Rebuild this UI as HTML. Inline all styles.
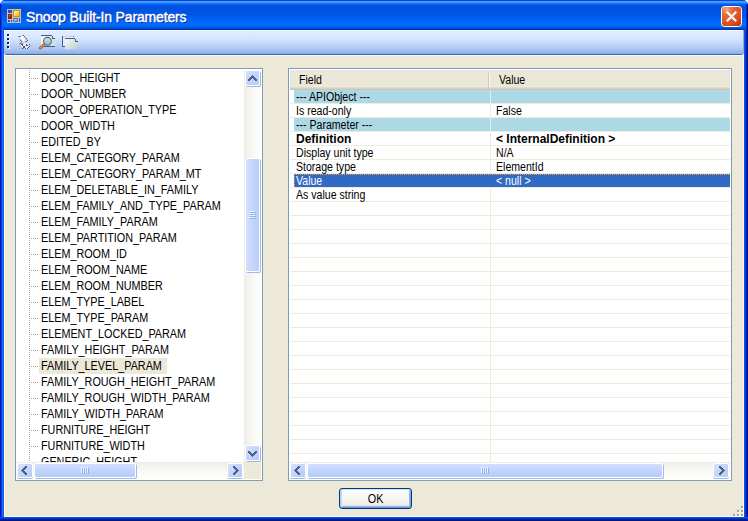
<!DOCTYPE html>
<html><head><meta charset="utf-8">
<style>
*{box-sizing:border-box;margin:0;padding:0}
html,body{width:748px;height:521px;overflow:hidden;background:#fff;font-family:"Liberation Sans",sans-serif}
.a{position:absolute}
#win{left:0;top:0;width:748px;height:521px;background:#0848DC;border-radius:5px 5px 0 0;overflow:hidden}
#lb{left:0;top:29px;width:4px;height:492px;background:linear-gradient(90deg,#0012C8 0,#0012C8 1px,#0840E0 1px,#0840E0 2px,#1A6EF0 2px,#1A6EF0 3px,#0C5CE8 3px)}
#lt{left:0;top:4px;width:2px;height:26px;background:linear-gradient(90deg,#0018C0 0,#0018C0 1px,#0840E0 1px)}
#rb{left:744px;top:29px;width:4px;height:492px;background:linear-gradient(90deg,#0A50E4 0,#0A50E4 1px,#0640DC 1px,#0640DC 2px,#0028B8 2px,#0028B8 3px,#000E88 3px)}
#rt{left:746px;top:4px;width:2px;height:26px;background:linear-gradient(90deg,#0030C8 0,#0030C8 1px,#00108E 1px)}
#bb{left:0;top:517px;width:748px;height:4px;background:linear-gradient(180deg,#0A4EE4 0,#0A4EE4 1px,#0636D4 1px,#0636D4 2px,#0020A8 2px,#0020A8 3px,#00128A 3px)}
#title{left:0;top:0;width:748px;height:30px;border-radius:5px 5px 0 0;background:linear-gradient(180deg,#0A44D8 0px,#0A44D8 1px,#4A9EFF 1px,#4A9EFF 2px,#3C94FF 2px,#3C94FF 3px,#1A76F8 3px,#1A76F8 4px,#0660EE 4px,#0660EE 5px,#0058E6 5px,#0058E6 6px,#0054E2 6px,#0054E2 7px,#0052E0 7px,#0052E0 8px,#0052DF 8px,#0052DF 9px,#0052DF 9px,#0052DF 10px,#0052DF 10px,#0052DF 11px,#0053E0 11px,#0053E0 12px,#0054E2 12px,#0054E2 13px,#0055E4 13px,#0055E4 14px,#0057E7 14px,#0057E7 15px,#0059EA 15px,#0059EA 16px,#005BED 16px,#005BED 17px,#005EF0 17px,#005EF0 18px,#0060F3 18px,#0060F3 19px,#0063F6 19px,#0063F6 20px,#0066F9 20px,#0066F9 21px,#0068FB 21px,#0068FB 22px,#006AFD 22px,#006AFD 23px,#006BFE 23px,#006BFE 24px,#006BFF 24px,#006BFF 25px,#0069FC 25px,#0069FC 26px,#0064F5 26px,#0064F5 27px,#005AE6 27px,#005AE6 28px,#0046CC 28px,#0046CC 29px,#0034B4 29px,#0034B4 30px)}
#ttext{left:26px;top:9px;color:#fff;font:14px "Liberation Sans",sans-serif;-webkit-text-stroke:0.45px #fff;letter-spacing:-0.15px;text-shadow:1px 1px 0 #0A1883;white-space:pre}
#close{left:721px;top:6px;width:21px;height:21px;border:1px solid #fff;border-radius:3px;background:radial-gradient(circle at 30% 25%,#F3A58A 0,#E5603A 35%,#D44414 80%,#C03A10 100%)}
#toolbar{left:4px;top:30px;width:740px;height:25px;border-radius:0 0 3px 3px;box-shadow:inset -1px 0 0 #8AAAE4;z-index:1;background:linear-gradient(180deg,#F4F8FF 0,#F4F8FF 1px,#E2EDFF 1px,#D8E6FD 8px,#C2D7F9 14px,#A8C4F2 20px,#90B2EB 23px,#88ACE8 24px,#3A64B8 24px,#3A64B8 25px)}
#content{left:4px;top:48px;width:740px;height:469px;background:#ECE9D8;box-shadow:inset 1px 1px 0 #FFFAE6,inset -1px -1px 0 #FFFAE6}
#cline{left:4px;top:55px;width:740px;height:1px;background:#FFFAE6}
.box{border:1px solid #7F9DB9;background:#fff}
#tree{left:15px;top:68px;width:248px;height:413px}
#grid{left:288px;top:68px;width:444px;height:413px}
#tv{left:17px;top:70px;width:227px;height:392px;overflow:hidden}
#vl{left:12px;top:0;width:1px;height:392px;background:repeating-linear-gradient(180deg,#ACA899 0,#ACA899 1px,transparent 1px,transparent 2px)}
.hd{position:absolute;left:14px;width:7px;height:1px;background:repeating-linear-gradient(90deg,#ACA899 0,#ACA899 1px,transparent 1px,transparent 2px)}
.ti{position:absolute;left:22px;height:16px;font-size:12px;line-height:16px;color:#000;white-space:pre;padding:0 3px 0 2px}
.ti span{display:inline-block;transform:scaleX(0.9);transform-origin:0 0}
.ti.sel{background:#ECE9D8;width:128px}
/* scrollbars */
.vtrack{background:linear-gradient(90deg,#EEEDE5 0,#F3F1EC 3px,#FDFDFA 14px,#FEFEFB 100%)}
.htrack{background:linear-gradient(180deg,#EEEDE5 0,#F3F1EC 3px,#FDFDFA 14px,#FEFEFB 100%)}
.btn{border-radius:2px;border:1px solid #fff;box-shadow:1px 1px 0 #A2B8E8;background:linear-gradient(135deg,#D8E4FD 0,#C6D7FC 40%,#B4CBF8 100%)}
.corner{background:#ECE9D8}
/* grid */
#gh{left:290px;top:70px;width:440px;height:20px;background:linear-gradient(180deg,#EBE8DA 0,#EBE8DA 16px,#EEEBDE 16px,#EEEBDE 17px,#E0DCCB 17px,#E0DCCB 18px,#D6D0BF 18px,#D6D0BF 19px,#CCC6B4 19px);font-size:12px;line-height:20px;color:#000}
#gh span{transform:scaleX(0.88);transform-origin:0 0}
#gsep{left:488px;top:73px;width:1px;height:14px;background:#C7C5B2;box-shadow:1px 0 0 #fff}
.gr{position:absolute;left:290px;width:440px;height:14px;border-bottom:1px solid #EFEBDD;font-size:12px;line-height:14px;color:#000;background:#fff}
.gr .f{position:absolute;left:6px;top:0;white-space:pre;transform:scaleX(0.88);transform-origin:0 0}
.gr .v{position:absolute;left:206px;top:0;white-space:pre;transform:scaleX(0.88);transform-origin:0 0}
.gr.b .f,.gr.b .v{transform:none}
.gr:before{content:"";position:absolute;left:200px;top:0;width:1px;height:14px;background:#EFEBDD}
.gr.cat{background:linear-gradient(90deg,#fff 0,#fff 4px,#ADD8E6 4px)}
.gr.b{font-weight:bold}
.gr.sel{background:linear-gradient(90deg,#fff 0,#fff 4px,#316AC5 4px);color:#fff}
.gr.sel:before{display:none}
.gl{position:absolute;left:290px;width:440px;height:1px;background:#EFEBDD}
#ok{left:339px;top:488px;width:73px;height:21px;border:1px solid #003C74;border-radius:3px;background:linear-gradient(180deg,#fff 0,#F4F4F0 60%,#ECEBE6 85%,#D6D0C5 100%);box-shadow:inset 0 1px 0 #CEDFFB,inset 1px 0 0 #B8CFF6,inset -1px 0 0 #7EA2E6,inset 0 -1px 0 #6F93DC,inset 2px 0 0 #C2D6F8,inset -2px 0 0 #98B6EE,inset 0 -2px 0 #95B3EC;font-size:12px;text-align:center;line-height:20px;color:#000}
#ok span{display:inline-block;transform:scaleX(0.9)}
svg.a{z-index:5}

#focus{left:294px;top:174px;width:436px;height:13px;z-index:3;
 background:
  repeating-linear-gradient(90deg,#E4A038 0,#E4A038 1px,transparent 1px,transparent 2px) 0 0/100% 1px no-repeat,
  repeating-linear-gradient(180deg,#E4A038 0,#E4A038 1px,transparent 1px,transparent 2px) 0 0/1px 100% no-repeat}
.gd{position:absolute;width:2px;height:2px;background:#A8A596;box-shadow:1px 1px 0 #fff}

</style></head><body>
<div id="win" class="a">
 <div id="title" class="a"></div>
 <div id="ttext" class="a">Snoop Built-In Parameters</div>

 <svg class="a" style="left:7px;top:9px" width="14" height="14" viewBox="0 0 14 14">
  <defs>
   <linearGradient id="ig1" x1="0" y1="0" x2="1" y2="1"><stop offset="0" stop-color="#FFF4C0"/><stop offset="0.5" stop-color="#FCD868"/><stop offset="1" stop-color="#EBB418"/></linearGradient>
   <linearGradient id="ig2" x1="0" y1="0" x2="0.6" y2="1"><stop offset="0" stop-color="#F08070"/><stop offset="0.5" stop-color="#C82818"/><stop offset="1" stop-color="#981008"/></linearGradient>
   <linearGradient id="ig3" x1="0" y1="0" x2="1" y2="1"><stop offset="0" stop-color="#C8E0FF"/><stop offset="1" stop-color="#5C8CDC"/></linearGradient>
  </defs>
  <g shape-rendering="crispEdges">
  <rect x="0" y="0" width="14" height="14" fill="#CFC4A4"/>
  <rect x="1" y="1" width="4" height="3" fill="#0B5BEA"/>
  <rect x="1" y="5" width="4" height="5" fill="#A81810"/>
  <rect x="2" y="6" width="2" height="3" fill="url(#ig2)"/>
  <rect x="6" y="1" width="7" height="7" fill="#C0960C"/>
  <rect x="7" y="2" width="5" height="5" fill="url(#ig1)"/>
  <rect x="1" y="11" width="2" height="2" fill="#0B5BEA"/>
  <rect x="4" y="11" width="1" height="2" fill="#0B5BEA"/>
  <rect x="6" y="9" width="5" height="4" fill="#4A78C8"/>
  <rect x="7" y="10" width="3" height="2" fill="url(#ig3)"/>
  <rect x="12" y="9" width="1" height="4" fill="#0B5BEA"/>
  </g>
 </svg>
 <svg class="a" style="left:721px;top:6px" width="21" height="21" viewBox="0 0 21 21">
  <defs><radialGradient id="cg" cx="0.25" cy="0.15" r="1"><stop offset="0" stop-color="#F2A888"/><stop offset="0.3" stop-color="#E86838"/><stop offset="0.75" stop-color="#DC4E1C"/><stop offset="1" stop-color="#C43A0C"/></radialGradient></defs>
  <rect x="0.5" y="0.5" width="20" height="20" rx="3" ry="3" fill="url(#cg)" stroke="#fff" stroke-width="1"/>
  <path d="M5.8 5.8 L15.2 15.2 M15.2 5.8 L5.8 15.2" stroke="#fff" stroke-width="2.2" stroke-linecap="butt"/>
 </svg>
 <svg class="a" style="left:4px;top:30px" width="90" height="24" viewBox="0 0 90 24">
  <g shape-rendering="crispEdges">
   <rect x="4" y="5" width="2" height="2" fill="#fff"/><rect x="3" y="4" width="2" height="2" fill="#0A2468"/>
   <rect x="4" y="9" width="2" height="2" fill="#fff"/><rect x="3" y="8" width="2" height="2" fill="#0A2468"/>
   <rect x="4" y="13" width="2" height="2" fill="#fff"/><rect x="3" y="12" width="2" height="2" fill="#0A2468"/>
   <rect x="4" y="17" width="2" height="2" fill="#fff"/><rect x="3" y="16" width="2" height="2" fill="#0A2468"/>
  </g>
  <!-- printer -->
  <g transform="translate(12,3)" shape-rendering="crispEdges"><rect x="6" y="2" width="1" height="1" fill="#A0A2AE"/><rect x="7" y="2" width="1" height="1" fill="#606478"/><rect x="2" y="3" width="1" height="1" fill="#A0A2AE"/><rect x="3" y="3" width="1" height="1" fill="#606478"/><rect x="4" y="3" width="1" height="1" fill="#A0A2AE"/><rect x="5" y="3" width="1" height="1" fill="#F8F8FC"/><rect x="6" y="3" width="1" height="1" fill="#F8F8FC"/><rect x="7" y="3" width="1" height="1" fill="#F8F8FC"/><rect x="8" y="3" width="1" height="1" fill="#606478"/><rect x="3" y="4" width="1" height="1" fill="#CCCCD8"/><rect x="4" y="4" width="1" height="1" fill="#F8F8FC"/><rect x="5" y="4" width="1" height="1" fill="#F8F8FC"/><rect x="6" y="4" width="1" height="1" fill="#F8F8FC"/><rect x="7" y="4" width="1" height="1" fill="#F8F8FC"/><rect x="8" y="4" width="1" height="1" fill="#CCCCD8"/><rect x="9" y="4" width="1" height="1" fill="#A0A2AE"/><rect x="3" y="5" width="1" height="1" fill="#CCCCD8"/><rect x="4" y="5" width="1" height="1" fill="#F8F8FC"/><rect x="5" y="5" width="1" height="1" fill="#F8F8FC"/><rect x="6" y="5" width="1" height="1" fill="#F8F8FC"/><rect x="7" y="5" width="1" height="1" fill="#F8F8FC"/><rect x="8" y="5" width="1" height="1" fill="#F8F8FC"/><rect x="9" y="5" width="1" height="1" fill="#CCCCD8"/><rect x="10" y="5" width="1" height="1" fill="#606478"/><rect x="4" y="6" width="1" height="1" fill="#A0A2AE"/><rect x="5" y="6" width="1" height="1" fill="#F8F8FC"/><rect x="6" y="6" width="1" height="1" fill="#F8F8FC"/><rect x="7" y="6" width="1" height="1" fill="#F8F8FC"/><rect x="8" y="6" width="1" height="1" fill="#F8F8FC"/><rect x="9" y="6" width="1" height="1" fill="#CCCCD8"/><rect x="10" y="6" width="1" height="1" fill="#A0A2AE"/><rect x="4" y="7" width="1" height="1" fill="#606478"/><rect x="5" y="7" width="1" height="1" fill="#CCCCD8"/><rect x="6" y="7" width="1" height="1" fill="#F8F8FC"/><rect x="7" y="7" width="1" height="1" fill="#F8F8FC"/><rect x="8" y="7" width="1" height="1" fill="#F8F8FC"/><rect x="9" y="7" width="1" height="1" fill="#CCCCD8"/><rect x="11" y="7" width="1" height="1" fill="#4A549A"/><rect x="5" y="8" width="1" height="1" fill="#606478"/><rect x="6" y="8" width="1" height="1" fill="#CCCCD8"/><rect x="7" y="8" width="1" height="1" fill="#F8F8FC"/><rect x="8" y="8" width="1" height="1" fill="#CCCCD8"/><rect x="9" y="8" width="1" height="1" fill="#98A2D0"/><rect x="10" y="8" width="1" height="1" fill="#4A549A"/><rect x="12" y="8" width="1" height="1" fill="#D8DAEE"/><rect x="5" y="9" width="1" height="1" fill="#A0A2AE"/><rect x="6" y="9" width="1" height="1" fill="#CCCCD8"/><rect x="7" y="9" width="1" height="1" fill="#CCCCD8"/><rect x="8" y="9" width="1" height="1" fill="#CCCCD8"/><rect x="10" y="9" width="1" height="1" fill="#D8DAEE"/><rect x="11" y="9" width="1" height="1" fill="#D8DAEE"/><rect x="12" y="9" width="1" height="1" fill="#D8DAEE"/><rect x="13" y="9" width="1" height="1" fill="#D8DAEE"/><rect x="3" y="10" width="1" height="1" fill="#98A2D0"/><rect x="4" y="10" width="1" height="1" fill="#4A549A"/><rect x="5" y="10" width="1" height="1" fill="#98A2D0"/><rect x="6" y="10" width="1" height="1" fill="#98A2D0"/><rect x="8" y="10" width="1" height="1" fill="#F8F8FC"/><rect x="9" y="10" width="1" height="1" fill="#D8DAEE"/><rect x="10" y="10" width="1" height="1" fill="#F8F8FC"/><rect x="11" y="10" width="1" height="1" fill="#D8DAEE"/><rect x="12" y="10" width="1" height="1" fill="#D8DAEE"/><rect x="13" y="10" width="1" height="1" fill="#D8DAEE"/><rect x="3" y="11" width="1" height="1" fill="#B8CCCE"/><rect x="4" y="11" width="1" height="1" fill="#D8DAEE"/><rect x="5" y="11" width="1" height="1" fill="#4A549A"/><rect x="6" y="11" width="1" height="1" fill="#4A549A"/><rect x="7" y="11" width="1" height="1" fill="#D8DAEE"/><rect x="8" y="11" width="1" height="1" fill="#F8F8FC"/><rect x="9" y="11" width="1" height="1" fill="#F8F8FC"/><rect x="10" y="11" width="1" height="1" fill="#4A549A"/><rect x="11" y="11" width="1" height="1" fill="#D8DAEE"/><rect x="12" y="11" width="1" height="1" fill="#D8DAEE"/><rect x="13" y="11" width="1" height="1" fill="#4A549A"/><rect x="14" y="11" width="1" height="1" fill="#D8DAEE"/><rect x="3" y="12" width="1" height="1" fill="#B8CCCE"/><rect x="4" y="12" width="1" height="1" fill="#B8CCCE"/><rect x="5" y="12" width="1" height="1" fill="#F8F8FC"/><rect x="6" y="12" width="1" height="1" fill="#4A549A"/><rect x="7" y="12" width="1" height="1" fill="#D8DAEE"/><rect x="8" y="12" width="1" height="1" fill="#D8DAEE"/><rect x="9" y="12" width="1" height="1" fill="#F8F8FC"/><rect x="10" y="12" width="1" height="1" fill="#4A549A"/><rect x="11" y="12" width="1" height="1" fill="#4A549A"/><rect x="12" y="12" width="1" height="1" fill="#D8DAEE"/><rect x="13" y="12" width="1" height="1" fill="#D8DAEE"/><rect x="14" y="12" width="1" height="1" fill="#98A2D0"/><rect x="3" y="13" width="1" height="1" fill="#B8CCCE"/><rect x="4" y="13" width="1" height="1" fill="#B8CCCE"/><rect x="5" y="13" width="1" height="1" fill="#D8DAEE"/><rect x="6" y="13" width="1" height="1" fill="#F8F8FC"/><rect x="7" y="13" width="1" height="1" fill="#4A549A"/><rect x="8" y="13" width="1" height="1" fill="#4A549A"/><rect x="9" y="13" width="1" height="1" fill="#D8DAEE"/><rect x="10" y="13" width="1" height="1" fill="#D8DAEE"/><rect x="11" y="13" width="1" height="1" fill="#F8F8FC"/><rect x="12" y="13" width="1" height="1" fill="#D8DAEE"/><rect x="13" y="13" width="1" height="1" fill="#4A549A"/><rect x="3" y="14" width="1" height="1" fill="#B8CCCE"/><rect x="4" y="14" width="1" height="1" fill="#B8CCCE"/><rect x="5" y="14" width="1" height="1" fill="#B8CCCE"/><rect x="6" y="14" width="1" height="1" fill="#D8DAEE"/><rect x="7" y="14" width="1" height="1" fill="#4A549A"/><rect x="8" y="14" width="1" height="1" fill="#4A549A"/><rect x="9" y="14" width="1" height="1" fill="#D8DAEE"/><rect x="10" y="14" width="1" height="1" fill="#F8F8FC"/><rect x="11" y="14" width="1" height="1" fill="#D8DAEE"/><rect x="12" y="14" width="1" height="1" fill="#4A549A"/><rect x="13" y="14" width="1" height="1" fill="#D8DAEE"/><rect x="3" y="15" width="1" height="1" fill="#A0A2AE"/><rect x="4" y="15" width="1" height="1" fill="#B8CCCE"/><rect x="5" y="15" width="1" height="1" fill="#B8CCCE"/><rect x="6" y="15" width="1" height="1" fill="#4A549A"/><rect x="7" y="15" width="1" height="1" fill="#98A2D0"/><rect x="8" y="15" width="1" height="1" fill="#D8DAEE"/><rect x="9" y="15" width="1" height="1" fill="#4A549A"/><rect x="10" y="15" width="1" height="1" fill="#D8DAEE"/><rect x="11" y="15" width="1" height="1" fill="#4A549A"/><rect x="12" y="15" width="1" height="1" fill="#D8DAEE"/></g>
  <!-- magnifier doc -->
  <defs>
   <linearGradient id="docg" x1="0" y1="0" x2="1" y2="0"><stop offset="0" stop-color="#FAFCFC"/><stop offset="1" stop-color="#D0E2DE"/></linearGradient>
   <linearGradient id="lensg" x1="0" y1="0" x2="0" y2="1"><stop offset="0" stop-color="#D4E6F8"/><stop offset="1" stop-color="#88B4E4"/></linearGradient>
   <linearGradient id="wing" x1="0" y1="0" x2="1" y2="1"><stop offset="0" stop-color="#F6F8F8"/><stop offset="1" stop-color="#BCD0CE"/></linearGradient>
  </defs>
  <g shape-rendering="crispEdges">
   <rect x="37" y="6" width="11" height="10" fill="url(#docg)"/>
   <rect x="48" y="8" width="3" height="8" fill="#D0E2DE"/>
   <rect x="37" y="5" width="11" height="1" fill="#3A62A0"/>
   <rect x="48" y="6" width="1" height="2" fill="#3A62A0"/><rect x="48" y="8" width="3" height="1" fill="#3A62A0"/>
   <rect x="39" y="16" width="12" height="1" fill="#3A62A0"/>
  </g>
  <circle cx="43.4" cy="11.3" r="3.9" fill="url(#lensg)" stroke="#6A625C" stroke-width="1.1"/>
  <path d="M39.8 14.8 L36.2 18.2" stroke="#7A5028" stroke-width="2.6" stroke-linecap="round"/>
  <path d="M39.8 14.8 L36.2 18.2" stroke="#E0903C" stroke-width="1.6" stroke-linecap="round"/>
  <!-- windows -->
  <g shape-rendering="crispEdges">
   <rect x="58" y="6" width="12" height="10" fill="#E6ECEC"/>
   <rect x="59" y="6" width="10" height="1" fill="#C4D2DE"/>
   <rect x="69" y="6" width="1" height="1" fill="#5A7AB8"/>
   <rect x="58" y="6" width="1" height="11" fill="#3A62A0"/>
   <rect x="58" y="16" width="3" height="1" fill="#3A62A0"/>
   <rect x="61" y="9" width="13" height="10" fill="url(#wing)"/>
   <rect x="61" y="8" width="10" height="1" fill="#3A62A0"/>
   <rect x="71" y="9" width="1" height="2" fill="#3A62A0"/><rect x="71" y="11" width="3" height="1" fill="#3A62A0"/>
   <rect x="71" y="8" width="3" height="3" fill="#DDE6F2" opacity="0.0"/>
  </g>
 </svg>
 <div id="lb" class="a"></div><div id="rb" class="a"></div><div id="bb" class="a"></div>
 <div id="toolbar" class="a"></div>
 <div id="lt" class="a"></div><div id="rt" class="a"></div>
 <div id="content" class="a"></div>
 <div id="cline" class="a"></div>
 <div id="tree" class="a box"></div>
 <div id="tv" class="a">
  <div id="vl" class="a"></div>
<div class="hd" style="top:8px"></div><div class="ti" style="top:0px"><span>DOOR_HEIGHT</span></div>
<div class="hd" style="top:24px"></div><div class="ti" style="top:16px"><span>DOOR_NUMBER</span></div>
<div class="hd" style="top:40px"></div><div class="ti" style="top:32px"><span>DOOR_OPERATION_TYPE</span></div>
<div class="hd" style="top:56px"></div><div class="ti" style="top:48px"><span>DOOR_WIDTH</span></div>
<div class="hd" style="top:72px"></div><div class="ti" style="top:64px"><span>EDITED_BY</span></div>
<div class="hd" style="top:88px"></div><div class="ti" style="top:80px"><span>ELEM_CATEGORY_PARAM</span></div>
<div class="hd" style="top:104px"></div><div class="ti" style="top:96px"><span>ELEM_CATEGORY_PARAM_MT</span></div>
<div class="hd" style="top:120px"></div><div class="ti" style="top:112px"><span>ELEM_DELETABLE_IN_FAMILY</span></div>
<div class="hd" style="top:136px"></div><div class="ti" style="top:128px"><span>ELEM_FAMILY_AND_TYPE_PARAM</span></div>
<div class="hd" style="top:152px"></div><div class="ti" style="top:144px"><span>ELEM_FAMILY_PARAM</span></div>
<div class="hd" style="top:168px"></div><div class="ti" style="top:160px"><span>ELEM_PARTITION_PARAM</span></div>
<div class="hd" style="top:184px"></div><div class="ti" style="top:176px"><span>ELEM_ROOM_ID</span></div>
<div class="hd" style="top:200px"></div><div class="ti" style="top:192px"><span>ELEM_ROOM_NAME</span></div>
<div class="hd" style="top:216px"></div><div class="ti" style="top:208px"><span>ELEM_ROOM_NUMBER</span></div>
<div class="hd" style="top:232px"></div><div class="ti" style="top:224px"><span>ELEM_TYPE_LABEL</span></div>
<div class="hd" style="top:248px"></div><div class="ti" style="top:240px"><span>ELEM_TYPE_PARAM</span></div>
<div class="hd" style="top:264px"></div><div class="ti" style="top:256px"><span>ELEMENT_LOCKED_PARAM</span></div>
<div class="hd" style="top:280px"></div><div class="ti" style="top:272px"><span>FAMILY_HEIGHT_PARAM</span></div>
<div class="hd" style="top:296px"></div><div class="ti sel" style="top:288px"><span>FAMILY_LEVEL_PARAM</span></div>
<div class="hd" style="top:312px"></div><div class="ti" style="top:304px"><span>FAMILY_ROUGH_HEIGHT_PARAM</span></div>
<div class="hd" style="top:328px"></div><div class="ti" style="top:320px"><span>FAMILY_ROUGH_WIDTH_PARAM</span></div>
<div class="hd" style="top:344px"></div><div class="ti" style="top:336px"><span>FAMILY_WIDTH_PARAM</span></div>
<div class="hd" style="top:360px"></div><div class="ti" style="top:352px"><span>FURNITURE_HEIGHT</span></div>
<div class="hd" style="top:376px"></div><div class="ti" style="top:368px"><span>FURNITURE_WIDTH</span></div>
<div class="hd" style="top:392px"></div><div class="ti" style="top:384px"><span>GENERIC_HEIGHT</span></div>
 </div>
<div class="a vtrack" style="left:244px;top:70px;width:17px;height:392px"></div><div class="a btn" style="left:245px;top:70px;width:15px;height:16px"></div><svg class="a" style="left:244px;top:70px" width="17" height="17" viewBox="0 0 17 17"><path d="M4 10h2v1h-2zM11 10h2v1h-2zM4 9h3v1h-3zM10 9h3v1h-3zM5 8h3v1h-3zM9 8h3v1h-3zM6 7h5v1h-5zM7 6h3v1h-3zM8 5h1v1h-1z" fill="#4D6185"/></svg><div class="a btn" style="left:245px;top:158px;width:15px;height:114px;background:linear-gradient(90deg,#D2DFFD 0,#C6D6FC 40%,#B9CEF9 100%)"></div><div class="a" style="left:249px;top:211px;width:6px;height:1px;background:#F0F4FF"></div><div class="a" style="left:250px;top:212px;width:6px;height:1px;background:#8CB0F8"></div><div class="a" style="left:249px;top:213px;width:6px;height:1px;background:#F0F4FF"></div><div class="a" style="left:250px;top:214px;width:6px;height:1px;background:#8CB0F8"></div><div class="a" style="left:249px;top:215px;width:6px;height:1px;background:#F0F4FF"></div><div class="a" style="left:250px;top:216px;width:6px;height:1px;background:#8CB0F8"></div><div class="a" style="left:249px;top:217px;width:6px;height:1px;background:#F0F4FF"></div><div class="a" style="left:250px;top:218px;width:6px;height:1px;background:#8CB0F8"></div><div class="a btn" style="left:245px;top:445px;width:15px;height:16px"></div><svg class="a" style="left:244px;top:445px" width="17" height="17" viewBox="0 0 17 17"><path d="M4 6h2v1h-2zM11 6h2v1h-2zM4 7h3v1h-3zM10 7h3v1h-3zM5 8h3v1h-3zM9 8h3v1h-3zM6 9h5v1h-5zM7 10h3v1h-3zM8 11h1v1h-1z" fill="#4D6185"/></svg><div class="a htrack" style="left:17px;top:462px;width:227px;height:17px"></div><div class="a btn" style="left:17px;top:463px;width:16px;height:15px;box-shadow:0 1px 0 #A2B8E8"></div><svg class="a" style="left:17px;top:462px" width="17" height="17" viewBox="0 0 17 17"><path d="M9 4h1v2h-1zM9 11h1v2h-1zM8 4h1v3h-1zM8 10h1v3h-1zM7 5h1v3h-1zM7 9h1v3h-1zM6 6h1v5h-1zM5 7h1v3h-1zM4 8h1v1h-1z" fill="#4D6185"/></svg><div class="a btn" style="left:34px;top:463px;width:102px;height:15px;background:linear-gradient(180deg,#D2DFFD 0,#C6D6FC 40%,#B4CBF8 100%)"></div><div class="a" style="left:81px;top:467px;width:1px;height:6px;background:#F0F4FF"></div><div class="a" style="left:82px;top:468px;width:1px;height:6px;background:#8CB0F8"></div><div class="a" style="left:83px;top:467px;width:1px;height:6px;background:#F0F4FF"></div><div class="a" style="left:84px;top:468px;width:1px;height:6px;background:#8CB0F8"></div><div class="a" style="left:85px;top:467px;width:1px;height:6px;background:#F0F4FF"></div><div class="a" style="left:86px;top:468px;width:1px;height:6px;background:#8CB0F8"></div><div class="a" style="left:87px;top:467px;width:1px;height:6px;background:#F0F4FF"></div><div class="a" style="left:88px;top:468px;width:1px;height:6px;background:#8CB0F8"></div><div class="a btn" style="left:227px;top:463px;width:16px;height:15px;box-shadow:0 1px 0 #A2B8E8"></div><svg class="a" style="left:227px;top:462px" width="17" height="17" viewBox="0 0 17 17"><path d="M6 4h1v2h-1zM6 11h1v2h-1zM7 4h1v3h-1zM7 10h1v3h-1zM8 5h1v3h-1zM8 9h1v3h-1zM9 6h1v5h-1zM10 7h1v3h-1zM11 8h1v1h-1z" fill="#4D6185"/></svg><div class="a corner" style="left:244px;top:462px;width:17px;height:17px"></div>
 <div id="grid" class="a box"></div>
 <div id="gh" class="a"><span class="a" style="left:9px;top:0">Field</span><span class="a" style="left:209px;top:0">Value</span></div>
 <div id="gsep" class="a"></div>
<div class="gr cat" style="top:90px"><span class="f">--- APIObject ---</span><span class="v"></span></div>
<div class="gr " style="top:104px"><span class="f">Is read-only</span><span class="v">False</span></div>
<div class="gr cat" style="top:118px"><span class="f">--- Parameter ---</span><span class="v"></span></div>
<div class="gr b" style="top:132px"><span class="f">Definition</span><span class="v">&lt; InternalDefinition &gt;</span></div>
<div class="gr " style="top:146px"><span class="f">Display unit type</span><span class="v">N/A</span></div>
<div class="gr " style="top:160px"><span class="f">Storage type</span><span class="v">ElementId</span></div>
<div class="gr sel" style="top:174px"><span class="f">Value</span><span class="v">&lt; null &gt;</span></div>
<div class="gr " style="top:188px"><span class="f">As value string</span><span class="v"></span></div>
<div class="gr" style="top:202px"></div>
<div class="gr" style="top:216px"></div>
<div class="gr" style="top:230px"></div>
<div class="gr" style="top:244px"></div>
<div class="gr" style="top:258px"></div>
<div class="gr" style="top:272px"></div>
<div class="gr" style="top:286px"></div>
<div class="gr" style="top:300px"></div>
<div class="gr" style="top:314px"></div>
<div class="gr" style="top:328px"></div>
<div class="gr" style="top:342px"></div>
<div class="gr" style="top:356px"></div>
<div class="gr" style="top:370px"></div>
<div class="gr" style="top:384px"></div>
<div class="gr" style="top:398px"></div>
<div class="gr" style="top:412px"></div>
<div class="gr" style="top:426px"></div>
<div class="gr" style="top:440px"></div>
<div class="gr" style="top:454px"></div>
 <div id="focus" class="a"></div>
<div class="a htrack" style="left:290px;top:462px;width:440px;height:17px"></div><div class="a btn" style="left:290px;top:463px;width:16px;height:15px;box-shadow:0 1px 0 #A2B8E8"></div><svg class="a" style="left:290px;top:462px" width="17" height="17" viewBox="0 0 17 17"><path d="M9 4h1v2h-1zM9 11h1v2h-1zM8 4h1v3h-1zM8 10h1v3h-1zM7 5h1v3h-1zM7 9h1v3h-1zM6 6h1v5h-1zM5 7h1v3h-1zM4 8h1v1h-1z" fill="#4D6185"/></svg><div class="a btn" style="left:307px;top:463px;width:356px;height:15px;background:linear-gradient(180deg,#D2DFFD 0,#C6D6FC 40%,#B4CBF8 100%)"></div><div class="a" style="left:481px;top:467px;width:1px;height:6px;background:#F0F4FF"></div><div class="a" style="left:482px;top:468px;width:1px;height:6px;background:#8CB0F8"></div><div class="a" style="left:483px;top:467px;width:1px;height:6px;background:#F0F4FF"></div><div class="a" style="left:484px;top:468px;width:1px;height:6px;background:#8CB0F8"></div><div class="a" style="left:485px;top:467px;width:1px;height:6px;background:#F0F4FF"></div><div class="a" style="left:486px;top:468px;width:1px;height:6px;background:#8CB0F8"></div><div class="a" style="left:487px;top:467px;width:1px;height:6px;background:#F0F4FF"></div><div class="a" style="left:488px;top:468px;width:1px;height:6px;background:#8CB0F8"></div><div class="a btn" style="left:713px;top:463px;width:16px;height:15px;box-shadow:0 1px 0 #A2B8E8"></div><svg class="a" style="left:713px;top:462px" width="17" height="17" viewBox="0 0 17 17"><path d="M6 4h1v2h-1zM6 11h1v2h-1zM7 4h1v3h-1zM7 10h1v3h-1zM8 5h1v3h-1zM8 9h1v3h-1zM9 6h1v5h-1zM10 7h1v3h-1zM11 8h1v1h-1z" fill="#4D6185"/></svg>
 <div class="gd" style="left:741px;top:506px"></div><div class="gd" style="left:737px;top:510px"></div><div class="gd" style="left:741px;top:510px"></div><div class="gd" style="left:733px;top:514px"></div><div class="gd" style="left:737px;top:514px"></div><div class="gd" style="left:741px;top:514px"></div>
 <div id="ok" class="a"><span>OK</span></div>
</div>

</body></html>
